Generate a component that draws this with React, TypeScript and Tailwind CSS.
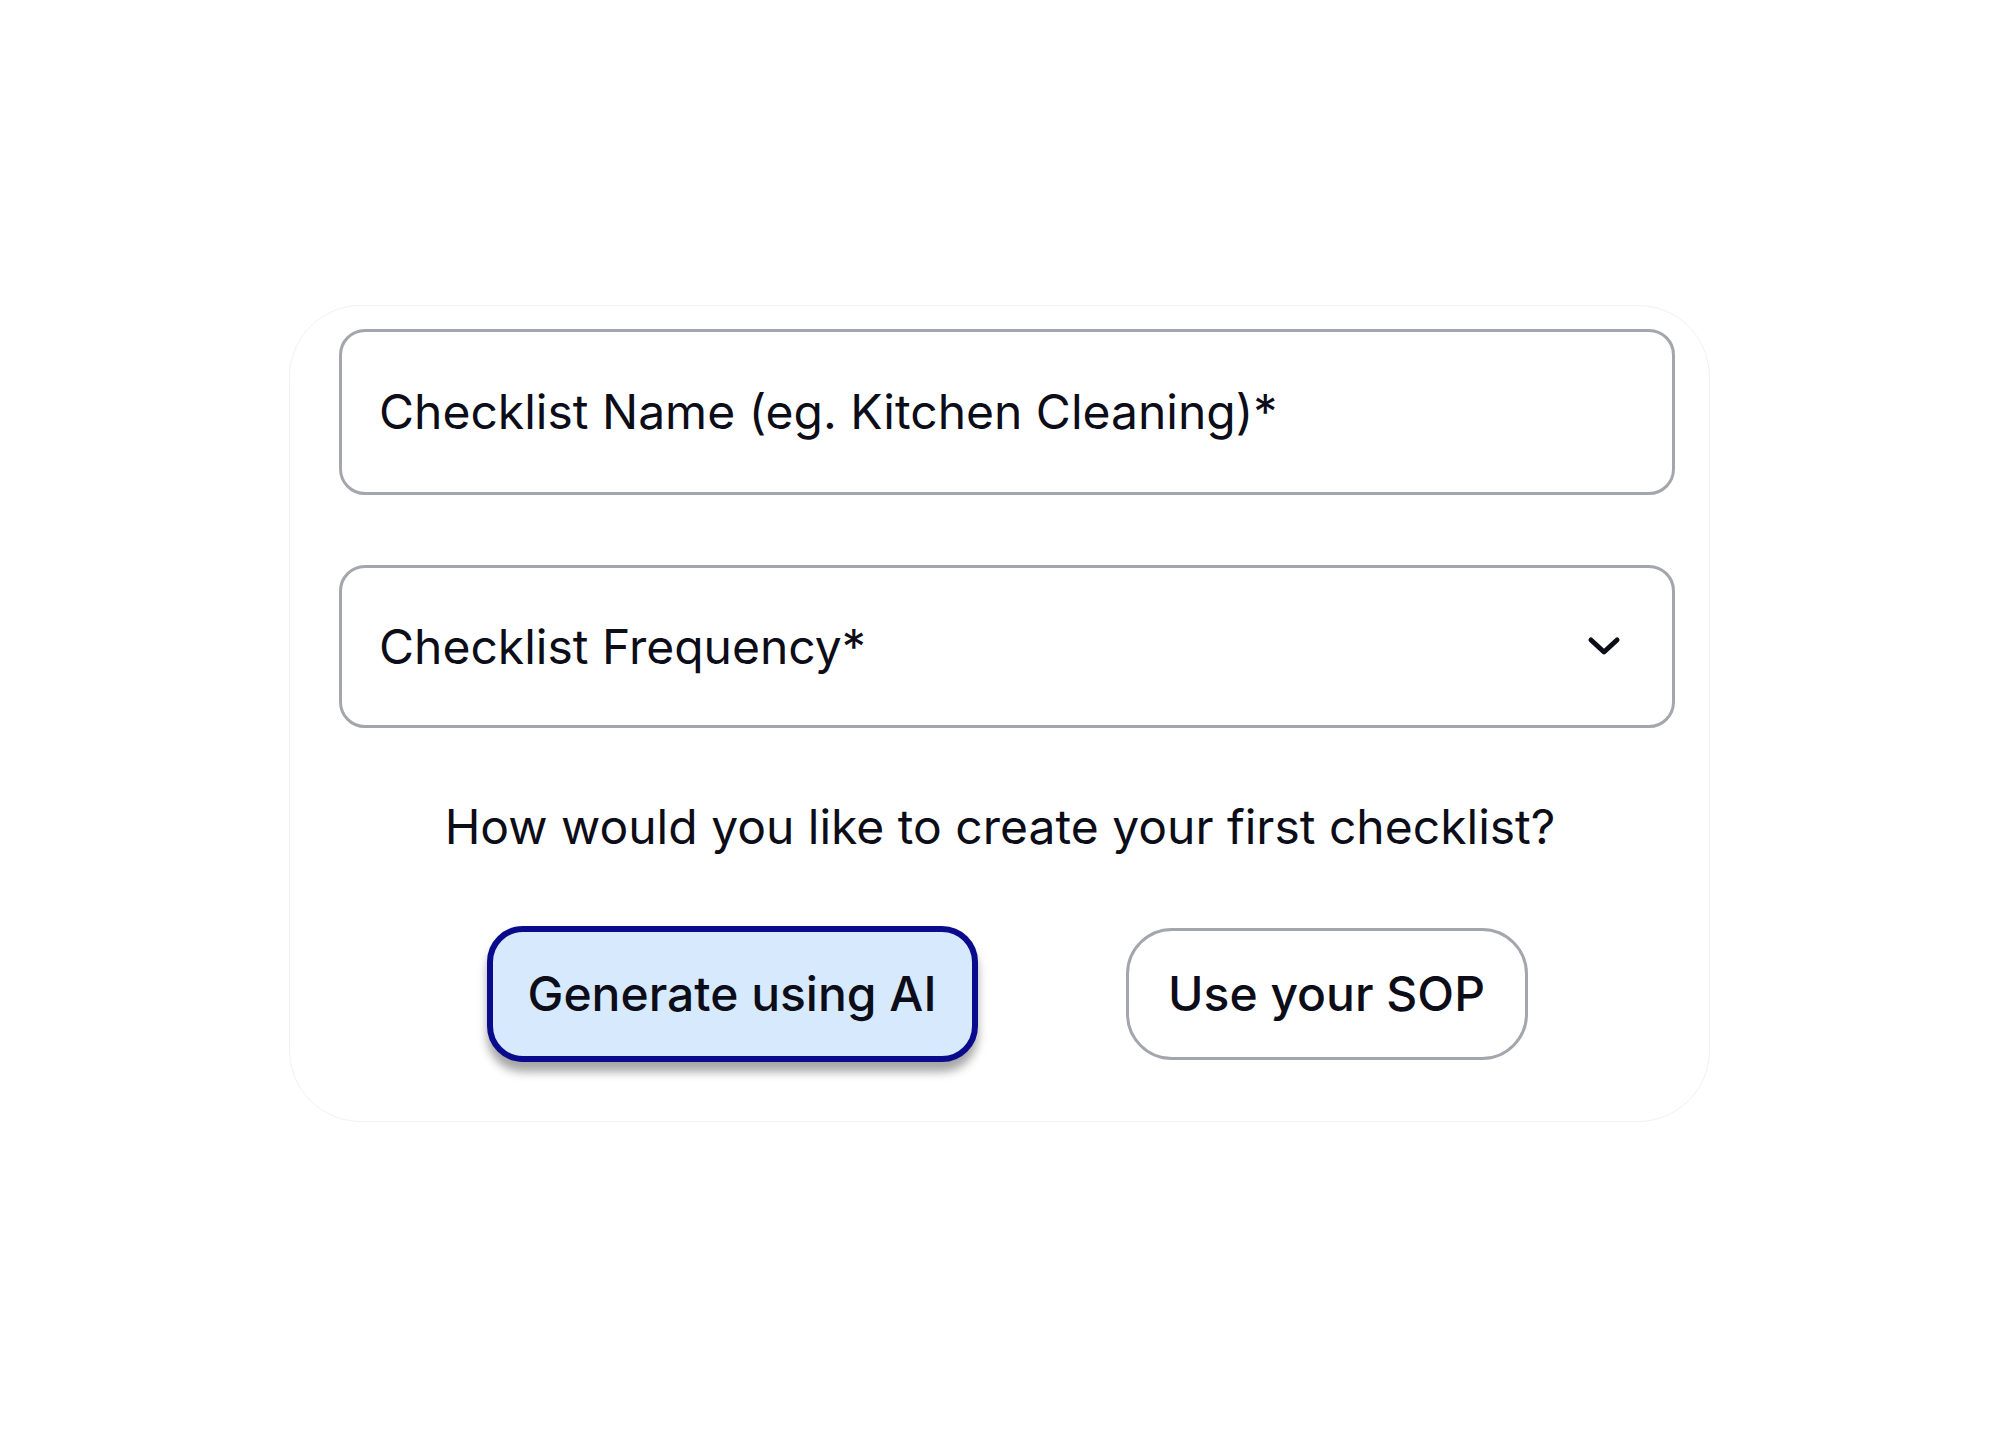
import React from 'react';

export default function App() {
  return (
    <div className="min-h-[1429px] w-full bg-white pt-[305px] font-['Inter',sans-serif] text-[#0c0d18]">
      {/* Card */}
      <div className="ml-[289px] flex h-[817px] w-[1421px] flex-col rounded-[72px] border border-[#f1f1f3] bg-white pl-[49px] pr-[34px] pt-[23px]">
        {/* Checklist name */}
        <div className="flex h-[166px] items-center rounded-[26px] border-[3px] border-[#a4a6ad] pl-[37px]">
          <span className="text-[48px] leading-none">Checklist Name (eg. Kitchen Cleaning)*</span>
        </div>

        {/* Frequency */}
        <div className="mt-[70px] flex h-[163px] items-center justify-between rounded-[26px] border-[3px] border-[#a4a6ad] pl-[37px] pr-[51px]">
          <span className="text-[48px] leading-none">Checklist Frequency*</span>
          <svg width="34" height="22" viewBox="0 0 34 22" fill="none" className="mt-[-2px]">
            <path d="M4 5l13 12L30 5" stroke="#0c0d18" strokeWidth="5" strokeLinecap="round" strokeLinejoin="round" />
          </svg>
        </div>

        <p className="mt-[71px] pr-[14px] text-center text-[48px] leading-[56px]">
          How would you like to create your first checklist?
        </p>

        <div className="mt-[71px] flex items-center justify-center gap-[148px]">
          <button className="flex h-[136px] w-[491px] items-center justify-center rounded-[36px] border-[6px] border-[#0a0a8c] bg-[#d6e9fd] text-[48px] font-medium shadow-[0_10px_10px_rgba(0,0,0,0.35)]">
            Generate using AI
          </button>
          <button className="flex h-[132px] w-[402px] items-center justify-center rounded-[46px] border-[3px] border-[#a4a6ad] bg-white text-[48px] font-medium">
            Use your SOP
          </button>
        </div>
      </div>
    </div>
  );
}
